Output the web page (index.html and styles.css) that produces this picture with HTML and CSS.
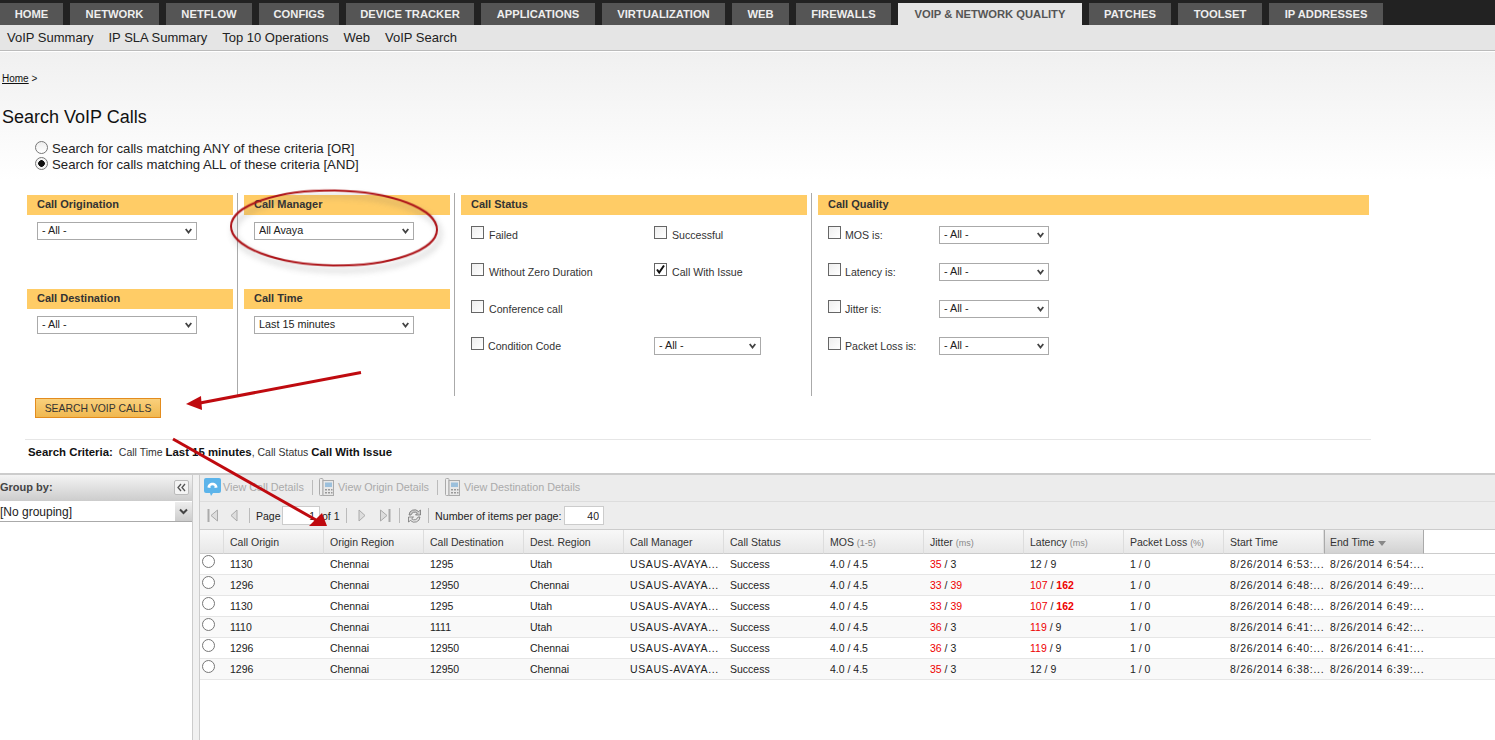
FILE: index.html
```html
<!DOCTYPE html>
<html lang="en">
<head>
<meta charset="utf-8">
<title>Search VoIP Calls</title>
<link rel="stylesheet" href="styles.css">
</head>
<body>
<nav class="tabs">
  <a class="tab">HOME</a><a class="tab">NETWORK</a><a class="tab">NETFLOW</a><a class="tab">CONFIGS</a><a class="tab">DEVICE TRACKER</a><a class="tab">APPLICATIONS</a><a class="tab">VIRTUALIZATION</a><a class="tab">WEB</a><a class="tab">FIREWALLS</a><a class="tab active">VOIP &amp; NETWORK QUALITY</a><a class="tab">PATCHES</a><a class="tab">TOOLSET</a><a class="tab">IP ADDRESSES</a>
</nav>
<nav class="subnav">
  <a>VoIP Summary</a><a>IP SLA Summary</a><a>Top 10 Operations</a><a>Web</a><a>VoIP Search</a>
</nav>

<main class="page">
  <div class="crumb"><a class="crumb-link">Home</a> &gt;</div>
  <h1 class="title">Search VoIP Calls</h1>
  <div class="modes">
    <label class="mode"><input class="radio" type="radio" name="mode">Search for calls matching ANY of these criteria [OR]</label>
    <label class="mode"><input class="radio" type="radio" name="mode" checked>Search for calls matching ALL of these criteria [AND]</label>
  </div>

  <div class="filters">
    <section class="col col-a">
      <div class="field">
        <h2 class="band">Call Origination</h2>
        <select class="sel sel-w"><option>- All -</option></select>
      </div>
      <div class="field">
        <h2 class="band">Call Destination</h2>
        <select class="sel sel-w"><option>- All -</option></select>
      </div>
    </section>
    <section class="col col-b">
      <div class="field">
        <h2 class="band">Call Manager</h2>
        <select class="sel sel-w"><option>All Avaya</option></select>
      </div>
      <div class="field">
        <h2 class="band">Call Time</h2>
        <select class="sel sel-w"><option>Last 15 minutes</option></select>
      </div>
    </section>
    <section class="col col-c">
      <h2 class="band">Call Status</h2>
      <div class="opts status">
        <label class="opt"><input class="check" type="checkbox">Failed</label>
        <label class="opt"><input class="check" type="checkbox">Successful</label>
        <label class="opt"><input class="check" type="checkbox">Without Zero Duration</label>
        <label class="opt"><input class="check" type="checkbox" checked>Call With Issue</label>
        <label class="opt"><input class="check" type="checkbox">Conference call</label>
        <span></span>
        <label class="opt tight"><input class="check" type="checkbox">Condition Code</label>
        <select class="sel sel-code"><option>- All -</option></select>
      </div>
    </section>
    <section class="col col-d">
      <h2 class="band">Call Quality</h2>
      <div class="opts quality">
        <label class="opt short"><input class="check" type="checkbox">MOS is:</label>
        <select class="sel sel-q"><option>- All -</option></select>
        <label class="opt short"><input class="check" type="checkbox">Latency is:</label>
        <select class="sel sel-q"><option>- All -</option></select>
        <label class="opt short"><input class="check" type="checkbox">Jitter is:</label>
        <select class="sel sel-q"><option>- All -</option></select>
        <label class="opt short"><input class="check" type="checkbox">Packet Loss is:</label>
        <select class="sel sel-q"><option>- All -</option></select>
      </div>
    </section>
  </div>

  <button class="go" type="button">SEARCH VOIP CALLS</button>
  <hr class="rule">
  <p class="criteria"><b class="crit-h">Search Criteria:</b>Call Time <b>Last 15 minutes</b>, Call Status <b>Call With Issue</b></p>
</main>

<section class="lower">
  <aside class="group">
    <div class="group-head">
      <b>Group by:</b>
      <span class="collapse"><svg width="11" height="9" viewBox="0 0 11 9"><path d="M5 1 2 4.500 5 8M9 1 6 4.500 9 8" fill="none" stroke="#555" stroke-width="1.300"/></svg></span>
    </div>
    <div class="group-sel">
      <span>[No grouping]</span>
      <span class="group-arrow"><svg width="9" height="7" viewBox="0 0 9 7"><path d="M1 1.500 4.500 5 8 1.500" fill="none" stroke="#444" stroke-width="2"/></svg></span>
    </div>
  </aside>
  <div class="split"></div>
  <div class="grid-wrap">
    <div class="toolbar">
      <svg class="ic-call" width="17" height="20" viewBox="0 0 17 20"><path d="M2 1h13a2 2 0 0 1 2 2v11a2 2 0 0 1-2 2H9l-2 3-1-3H2a2 2 0 0 1-2-2V3a2 2 0 0 1 2-2z" fill="#5cb4ea"/><path d="M3.500 10.500C3.500 4 13.500 4 13.500 10.500l-3 .5V9C9 8 8 8 6.500 9v2z" fill="#fff"/></svg>
      <span class="tool t-call">View Call Details</span>
      <i class="sep s-call"></i>
      <svg class="ic-phone" width="15" height="18" viewBox="0 0 15 18"><rect x=".5" y=".5" width="3.500" height="17" rx="1" fill="#eee" stroke="#aaa"/><rect x="4" y="2.500" width="10.500" height="15" fill="#e8e8e8" stroke="#aaa"/><rect x="6" y="4.500" width="7" height="4.500" fill="#9cc0dc"/><path d="M6 11h2v1.500H6zM9 11h2v1.500H9zM12 11h1.500v1.500H12zM6 14h2v1.500H6zM9 14h2v1.500H9zM12 14h1.500v1.500H12z" fill="#999"/></svg>
      <span class="tool t-orig">View Origin Details</span>
      <i class="sep s-orig"></i>
      <svg class="ic-phone" width="15" height="18" viewBox="0 0 15 18"><rect x=".5" y=".5" width="3.500" height="17" rx="1" fill="#eee" stroke="#aaa"/><rect x="4" y="2.500" width="10.500" height="15" fill="#e8e8e8" stroke="#aaa"/><rect x="6" y="4.500" width="7" height="4.500" fill="#9cc0dc"/><path d="M6 11h2v1.500H6zM9 11h2v1.500H9zM12 11h1.500v1.500H12zM6 14h2v1.500H6zM9 14h2v1.500H9zM12 14h1.500v1.500H12z" fill="#999"/></svg>
      <span class="tool t-dest">View Destination Details</span>
    </div>
    <div class="pager">
      <svg class="p-first" width="12" height="13" viewBox="0 0 12 13"><path d="M1.500 0v13" stroke="#aaa" stroke-width="2"/><path d="M10.500 1v11L4 6.500z" fill="#ddd" stroke="#aaa"/></svg>
      <svg class="p-prev" width="8" height="13" viewBox="0 0 8 13"><path d="M7 1v11L1 6.500z" fill="#ddd" stroke="#aaa"/></svg>
      <i class="sep p-s1"></i>
      <span class="p-page">Page</span>
      <input class="p-input p-cur" type="text" value="1" aria-label="Page">
      <span class="p-of">of 1</span>
      <i class="sep p-s2"></i>
      <svg class="p-next" width="8" height="13" viewBox="0 0 8 13"><path d="M1 1v11l6-5.500z" fill="#ddd" stroke="#aaa"/></svg>
      <svg class="p-last" width="12" height="13" viewBox="0 0 12 13"><path d="M10.500 0v13" stroke="#aaa" stroke-width="2"/><path d="M1.500 1v11L8 6.500z" fill="#ddd" stroke="#aaa"/></svg>
      <i class="sep p-s3"></i>
      <svg class="p-ref" width="15" height="16" viewBox="0 0 15 16"><path d="M2 7a5.500 5.500 0 0 1 9.500-3.500L13.500 2v5h-5l1.800-1.800A3.800 3.800 0 0 0 4 7z" fill="#ccc" stroke="#666" stroke-width=".7"/><path d="M13 9a5.500 5.500 0 0 1-9.500 3.500L1.500 14V9h5l-1.800 1.800A3.800 3.800 0 0 0 11 9z" fill="#e4e4e4" stroke="#666" stroke-width=".7"/></svg>
      <i class="sep p-s4"></i>
      <span class="p-num">Number of items per page:</span>
      <input class="p-input p-size" type="text" value="40" aria-label="Items per page">
    </div>
    <table class="calls">
      <thead>
        <tr>
          <th class="c-sel"></th><th>Call Origin</th><th>Origin Region</th><th>Call Destination</th><th>Dest. Region</th><th>Call Manager</th><th>Call Status</th><th>MOS <small>(1-5)</small></th><th>Jitter <small>(ms)</small></th><th>Latency <small>(ms)</small></th><th>Packet Loss <small>(%)</small></th><th>Start Time</th><th class="sorted">End Time <svg class="sort-ic" width="8" height="5" viewBox="0 0 8 5"><path d="M0 0h8L4 5z" fill="#888"/></svg></th><th class="c-fill"></th>
        </tr>
      </thead>
      <tbody>
        <tr><td class="c-sel"><input class="radio" type="radio" name="call"></td><td>1130</td><td>Chennai</td><td>1295</td><td>Utah</td><td>USAUS-AVAYA...</td><td>Success</td><td>4.0 / 4.5</td><td><em>35</em> / 3</td><td>12 / 9</td><td>1 / 0</td><td>8/26/2014 6:53:...</td><td>8/26/2014 6:54:...</td><td class="c-fill"></td></tr>
        <tr><td class="c-sel"><input class="radio" type="radio" name="call"></td><td>1296</td><td>Chennai</td><td>12950</td><td>Chennai</td><td>USAUS-AVAYA...</td><td>Success</td><td>4.0 / 4.5</td><td><em>33</em> / <em>39</em></td><td><em>107</em> / <em class="hot">162</em></td><td>1 / 0</td><td>8/26/2014 6:48:...</td><td>8/26/2014 6:49:...</td><td class="c-fill"></td></tr>
        <tr><td class="c-sel"><input class="radio" type="radio" name="call"></td><td>1130</td><td>Chennai</td><td>1295</td><td>Utah</td><td>USAUS-AVAYA...</td><td>Success</td><td>4.0 / 4.5</td><td><em>33</em> / <em>39</em></td><td><em>107</em> / <em class="hot">162</em></td><td>1 / 0</td><td>8/26/2014 6:48:...</td><td>8/26/2014 6:49:...</td><td class="c-fill"></td></tr>
        <tr><td class="c-sel"><input class="radio" type="radio" name="call"></td><td>1110</td><td>Chennai</td><td>1111</td><td>Utah</td><td>USAUS-AVAYA...</td><td>Success</td><td>4.0 / 4.5</td><td><em>36</em> / 3</td><td><em>119</em> / 9</td><td>1 / 0</td><td>8/26/2014 6:41:...</td><td>8/26/2014 6:42:...</td><td class="c-fill"></td></tr>
        <tr><td class="c-sel"><input class="radio" type="radio" name="call"></td><td>1296</td><td>Chennai</td><td>12950</td><td>Chennai</td><td>USAUS-AVAYA...</td><td>Success</td><td>4.0 / 4.5</td><td><em>36</em> / 3</td><td><em>119</em> / 9</td><td>1 / 0</td><td>8/26/2014 6:40:...</td><td>8/26/2014 6:41:...</td><td class="c-fill"></td></tr>
        <tr><td class="c-sel"><input class="radio" type="radio" name="call"></td><td>1296</td><td>Chennai</td><td>12950</td><td>Chennai</td><td>USAUS-AVAYA...</td><td>Success</td><td>4.0 / 4.5</td><td><em>35</em> / 3</td><td>12 / 9</td><td>1 / 0</td><td>8/26/2014 6:38:...</td><td>8/26/2014 6:39:...</td><td class="c-fill"></td></tr>
      </tbody>
    </table>
  </div>
</section>

<svg class="marks" width="1495" height="740" viewBox="0 0 1495 740" aria-hidden="true">
  <ellipse class="ring" cx="334" cy="228" rx="103" ry="37.500" transform="rotate(1 334 228)"/>
  <path class="shaft" d="M361 372.500 200 403"/>
  <path class="head" d="M186 404 201 396 202 410z"/>
  <path class="shaft" d="M173 439 316 520"/>
  <path class="head" d="M327 526 309 526 322 513z"/>
</svg>
</body>
</html>
```

FILE: styles.css
```css
* { box-sizing: border-box; }
html, body { margin: 0; padding: 0; }
body {
  position: relative;
  width: 1495px;
  height: 740px;
  overflow: hidden;
  background: #fff;
  color: #222;
  font-family: "Liberation Sans", Arial, sans-serif;
  font-size: 10.5px;
}

/* top navigation */
.tabs {
  display: grid;
  grid-template-columns: 63px 89px 86px 80px 128px 114px 123px 57px 95px 184px 82px 84px 114px;
  justify-content: start;
  gap: 7px;
  height: 25px;
  padding-top: 3px;
  background: #222;
}
.tab {
  background: #555;
  color: #eee;
  font-size: 11.2px;
  font-weight: bold;
  line-height: 22px;
  text-align: center;
  white-space: nowrap;
}
.tab.active { background: #e5e5e5; color: #555; }
.subnav {
  display: flex;
  gap: 15px;
  height: 26px;
  padding: 1px 0 0 7px;
  background: #e5e5e5;
  border-bottom: 1px solid #bbb;
  color: #222;
  font-size: 13px;
  line-height: 24px;
}

/* search form */
.page {
  height: 422px;
  border-top: 1px solid #fff;
  background: linear-gradient(#f0f0f0, #fff 128px);
  overflow: hidden;
}
.crumb { margin-top: 21px; padding-left: 2px; font-size: 10px; line-height: 12px; color: #111; }
.crumb-link { text-decoration: underline; }
.title { margin: 21px 0 0; padding-left: 2px; font-size: 18px; font-weight: normal; line-height: 22px; color: #111; }
.modes { margin-top: 12px; padding-left: 35px; }
.mode { display: flex; align-items: center; height: 16px; color: #222; font-size: 13.2px; }
.radio {
  appearance: none;
  flex: none;
  width: 13px;
  height: 13px;
  margin: 0 4px 2px 0;
  border: 1px solid #777;
  border-radius: 50%;
  background: linear-gradient(#eee, #fff);
}
.radio:checked { background: radial-gradient(circle, #111 0 3px, #f4f4f4 3.600px); }

.filters {
  display: grid;
  grid-template-columns: 210px 217px 357px 1fr;
  height: 203px;
  margin: 21px 0 0 27px;
}
.col { padding-top: 2px; }
.col-b, .col-c, .col-d { padding-left: 6px; border-left: 1px solid #aaa; }
.col-a .band, .col-b .band { width: 206px; }
.col-c .band { width: 346px; }
.col-d .band { width: 551px; }
.band {
  height: 20px;
  margin: 0;
  padding-left: 10px;
  background: #fc6;
  color: #333;
  font-size: 11px;
  font-weight: bold;
  line-height: 19px;
}
.field { height: 94px; }
.sel {
  display: block;
  appearance: none;
  height: 18px;
  padding: 0 0 2px 4px;
  border: 1px solid #aaa;
  border-radius: 0;
  background: #fff url("data:image/svg+xml,%3Csvg xmlns='http://www.w3.org/2000/svg' width='7' height='6'%3E%3Cpath d='M.7 1 3.500 4.500 6.300 1' fill='none' stroke='%23444' stroke-width='1.800'/%3E%3C/svg%3E") no-repeat right 4px center;
  color: #222;
  font-family: inherit;
  font-size: 10.8px;
}
.sel-w { width: 160px; margin: 7px 0 0 10px; }
.sel-code { width: 107px; }
.sel-q { width: 110px; }
.opts { display: grid; grid-auto-rows: 37px; margin-top: 11px; padding-left: 10px; }
.status { grid-template-columns: 183px 1fr; }
.quality { grid-template-columns: 111px 1fr; }
.opt { display: flex; align-items: flex-start; color: #333; font-size: 10.6px; line-height: 18px; }
.check {
  appearance: none;
  flex: none;
  width: 13px;
  height: 13px;
  margin: 0 5px 0 0;
  border: 1px solid #666;
  background: linear-gradient(135deg, #eee, #fff);
}
.check:checked { background: #fff url("data:image/svg+xml,%3Csvg xmlns='http://www.w3.org/2000/svg' width='11' height='11'%3E%3Cpath d='M2 5.500 4.200 8.500 9 1.500' fill='none' stroke='%23111' stroke-width='2'/%3E%3C/svg%3E") no-repeat center; }
.tight .check, .short .check { margin-right: 4px; }

.go {
  display: block;
  width: 126px;
  height: 20px;
  margin: 2px 0 0 35px;
  padding: 0;
  border: 1px solid #e38c1e;
  background: linear-gradient(#f9d07c, #f0b850);
  color: #333;
  font-family: inherit;
  font-size: 10.4px;
}
.rule { width: 1346px; height: 1px; margin: 21px 0 0 25px; border: 0; background: #e6e6e6; }
.criteria { margin: 5px 0 0 28px; color: #333; font-size: 10.5px; line-height: 14px; }
.criteria b { color: #111; font-size: 11.4px; }
.crit-h { margin-right: 6px; }

/* results */
.lower {
  display: flex;
  height: 267px;
  border-top: 2px solid #ccc;
}
.group { flex: none; width: 192px; }
.group-head {
  display: flex;
  align-items: center;
  justify-content: space-between;
  height: 26px;
  padding: 0 3px 2px 0;
  background: linear-gradient(#f4f4f4, #ccc);
  color: #444;
  font-size: 11px;
}
.collapse {
  display: flex;
  align-items: center;
  justify-content: center;
  width: 15px;
  height: 15px;
  border: 1px solid #bbb;
  border-radius: 2px;
  background: #f4f4f4;
}
.group-sel {
  display: flex;
  align-items: center;
  justify-content: space-between;
  height: 21px;
  padding-top: 1px;
  border-bottom: 1px solid #aaa;
  color: #222;
  font-size: 12px;
}
.group-arrow {
  display: flex;
  align-items: center;
  justify-content: center;
  width: 17px;
  height: 19px;
  background: linear-gradient(#eee, #ccc);
}
.split { flex: none; width: 8px; border: 1px solid #ccc; border-width: 0 1px; background: #f1f1f1; }
.grid-wrap { flex: 1; min-width: 0; }

.toolbar {
  display: flex;
  align-items: center;
  height: 27px;
  padding: 0 0 2px 4px;
  border-bottom: 1px solid #ddd;
  background: #ececec;
  color: #aaa;
  font-size: 10.8px;
}
.sep { flex: none; width: 1px; height: 15px; background: #bbb; }
.t-call { margin-left: 2px; width: 89px; }
.s-call { margin-right: 6px; }
.t-orig { margin-left: 4px; width: 99px; }
.s-orig { margin-right: 7px; }
.t-dest { margin-left: 4px; }

.pager {
  display: flex;
  align-items: center;
  height: 28px;
  border-bottom: 1px solid #ccc;
  background: #ededed;
  color: #222;
  font-size: 10.5px;
}
.p-first { margin-left: 7px; }
.p-prev { margin-left: 11px; }
.p-s1 { margin-left: 11px; }
.p-page { margin-left: 6px; width: 26px; }
.p-input {
  height: 19px;
  padding: 0 4px;
  border: 1px solid #ccc;
  background: #fff;
  color: #222;
  font-family: inherit;
  font-size: 10.5px;
  text-align: right;
}
.p-cur { width: 38px; }
.p-of { margin-left: 2px; width: 24px; }
.p-next { margin-left: 11px; }
.p-last { margin-left: 13px; }
.p-s3 { margin-left: 8px; }
.p-ref { margin-left: 7px; }
.p-s4 { margin-left: 6px; }
.p-num { margin-left: 6px; width: 129px; font-size: 10.7px; }
.p-size { width: 40px; }

.calls { width: 1295px; border-collapse: separate; border-spacing: 0; table-layout: fixed; }
.calls th, .calls td {
  width: 100px;
  padding: 0 0 0 6px;
  text-align: left;
  white-space: nowrap;
  overflow: hidden;
}
.calls th {
  height: 24px;
  padding-top: 1px;
  border-right: 1px solid #ddd;
  border-bottom: 1px solid #ccc;
  background: linear-gradient(#f8f8f8, #e8e8e8);
  color: #333;
  font-weight: normal;
  font-size: 10.5px;
}
.calls th.c-sel, .calls td.c-sel { width: 24px; padding: 0 0 0 2px; }
.calls th.c-fill, .calls td.c-fill { width: 71px; }
.calls th.c-fill { border-right: 0; background: #fff; }
.calls th.sorted { padding-left: 5px; background: linear-gradient(#eee, #d2d2d2); border-left: 1px solid #aaa; border-right: 1px solid #aaa; }
.sort-ic { margin-left: 1px; }
.calls small { color: #888; font-size: 9px; }
.calls td {
  height: 21px;
  border-bottom: 1px solid #e6e6e6;
  color: #222;
  font-size: 10.5px;
}
.calls td:nth-child(6) { letter-spacing: .6px; }
.calls td:nth-child(12), .calls td:nth-child(13) { letter-spacing: .7px; }
.calls tbody tr:nth-child(even) td { background: #f9f9f9; }
.calls td.c-sel { vertical-align: top; background: #fff; }
.calls td .radio { display: block; margin: 1px 0 0; background: #fff; }
.calls em { color: #e00; font-style: normal; }
.calls em.hot { font-weight: bold; }

/* hand-drawn annotations lying over the screenshot */
.marks { position: absolute; left: 0; top: 0; pointer-events: none; }
.ring { fill: none; stroke: #ad1419; stroke-width: 2; filter: drop-shadow(3px 5px 3px rgba(90, 90, 90, .45)); }
.shaft { fill: none; stroke: #bf0a0f; stroke-width: 3; }
.head { fill: #bf0a0f; }
```
